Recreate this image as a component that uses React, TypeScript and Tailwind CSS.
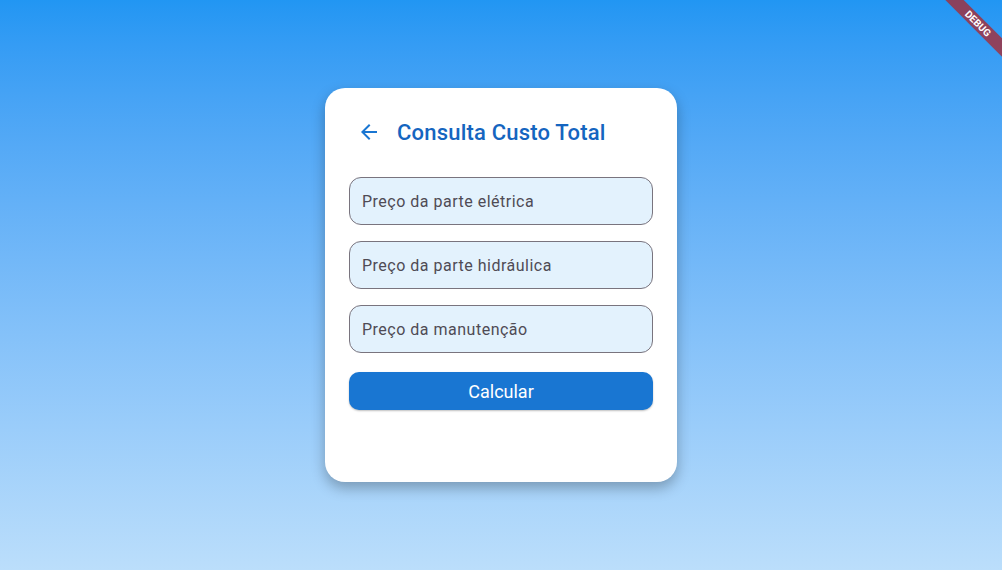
const fields = ['Preço da parte elétrica', 'Preço da parte hidráulica', 'Preço da manutenção'];

export default function App() {
  return (
    <div
      className="relative flex h-[570px] w-[1002px] items-center justify-center overflow-hidden bg-gradient-to-b from-[#2196f3] to-[#bbdefb]"
      style={{ fontFamily: 'Roboto, "Noto Sans", sans-serif' }}
    >
      {/* card */}
      <div className="flex h-[394px] w-[352px] flex-col rounded-[20px] bg-white p-6 shadow-[0_6px_14px_rgba(0,0,0,0.28)]">
        <div className="flex h-10 items-center gap-2">
          <button className="flex h-10 w-10 items-center justify-center text-[#1976d2]">
            <svg width="24" height="24" viewBox="0 0 24 24" fill="currentColor">
              <path d="M20 11H7.83l5.59-5.59L12 4l-8 8 8 8 1.41-1.41L7.83 13H20v-2z" />
            </svg>
          </button>
          <h1 className="text-[22px] font-medium tracking-[0.2px] text-[#1565c0]">Consulta Custo Total</h1>
        </div>

        <div className="mt-[25px] flex flex-col gap-4">
          {fields.map((label) => (
            <div
              key={label}
              className="flex h-12 items-center rounded-xl border border-[#79747e] bg-[#e3f2fd] px-3 pt-[2px] text-base tracking-[0.5px] text-[#4f4b55]"
            >
              {label}
            </div>
          ))}
        </div>

        <button className="mt-[19px] h-[38px] rounded-[10px] bg-[#1976d2] text-[18px] text-white shadow-[0_1px_2px_rgba(0,0,0,0.25)]">
          Calcular
        </button>
      </div>

      {/* debug banner */}
      <div className="absolute left-[933px] top-[17px] flex h-[13px] w-[90px] rotate-45 items-center justify-center bg-[#b71c1c]/[0.7] text-[10px] font-bold leading-none text-white">
        DEBUG
      </div>
    </div>
  );
}
